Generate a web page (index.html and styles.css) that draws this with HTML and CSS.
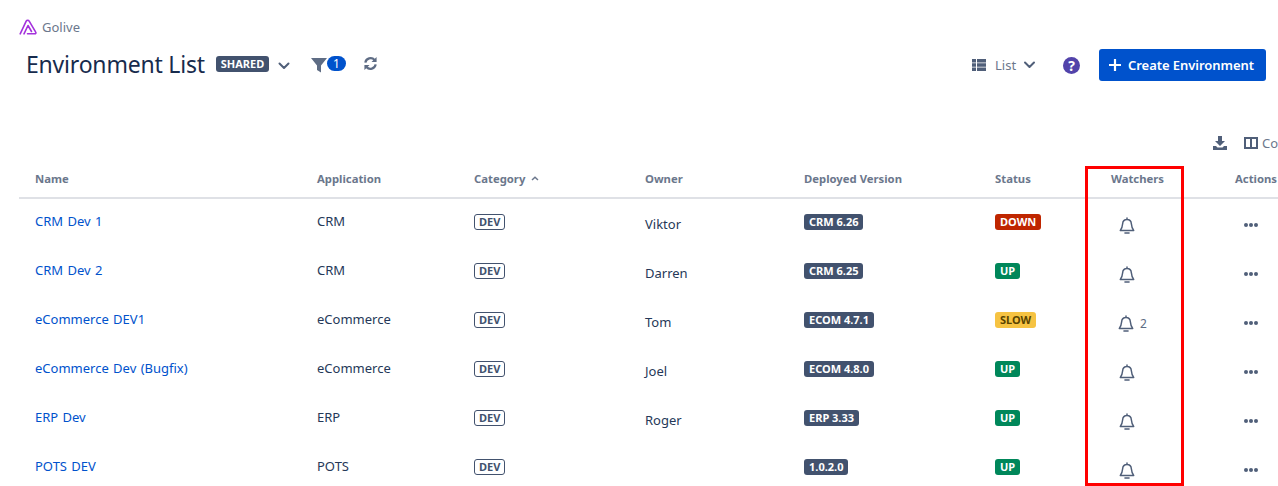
FILE: index.html
```html
<!DOCTYPE html>
<html lang="en">
<head>
<meta charset="utf-8">
<title>Environment List</title>
<link rel="stylesheet" href="styles.css">
</head>
<body>
<svg class="defs" width="0" height="0" aria-hidden="true">
  <symbol id="bell" viewBox="0 0 16 18">
    <path d="M8 1v1.600M8 2.600c-2.700 0-4.200 1.900-4.400 4.400-.2 2.600-.5 4.300-2.300 6.400h13.400c-1.800-2.100-2.100-3.800-2.300-6.400C12.200 4.500 10.700 2.600 8 2.600z" fill="none" stroke="currentColor" stroke-width="1.500" stroke-linejoin="round" stroke-linecap="round"/>
    <path d="M6 16h4" fill="none" stroke="currentColor" stroke-width="1.600" stroke-linecap="round"/>
  </symbol>
  <symbol id="dots" viewBox="0 0 14 4">
    <circle cx="2" cy="2" r="2"/><circle cx="7" cy="2" r="2"/><circle cx="12" cy="2" r="2"/>
  </symbol>
</svg>
<header class="top">
  <div class="crumb">
    <svg class="logo" viewBox="0 0 18 16" aria-hidden="true">
      <path d="M1.200 14.800 7.200 2.200c.6-1.200 2.400-1.200 3 0l6.500 11c.5.800 0 1.600-.9 1.600H8.500M5 14.800 9 6.500l3.500 6" fill="none" stroke="#a431dc" stroke-width="1.600" stroke-linejoin="round" stroke-linecap="round"/>
    </svg>
    <span>Golive</span>
  </div>
  <div class="titlebar">
    <h1 class="title">Environment List</h1>
    <span class="lozenge shared">SHARED</span>
    <svg class="chev" viewBox="0 0 12 8" aria-hidden="true"><path d="M1.500 1.500 6 6l4.500-4.500" fill="none" stroke="currentColor" stroke-width="2" stroke-linecap="round" stroke-linejoin="round"/></svg>
    <span class="filter">
      <svg class="funnel" viewBox="0 0 16 16" aria-hidden="true"><path d="M0 1h16L10 8.500V15.500L6 13V8.500z" fill="currentColor"/></svg>
      <span class="count">1</span>
    </span>
    <svg class="refresh" viewBox="0 0 16 16" aria-hidden="true">
      <path d="M2.500 7A5.600 5.600 0 0 1 12.300 4.200M13.500 9A5.600 5.600 0 0 1 3.700 11.800" fill="none" stroke="currentColor" stroke-width="2.400"/>
      <path d="M14.500 1v5.500H9zM1.500 15V9.500H7z" fill="currentColor"/>
    </svg>
    <div class="actions-right">
      <svg class="listicon" viewBox="0 0 14 12" aria-hidden="true">
        <path d="M0 0h4v3.400H0zM5 0h9v3.400H5zM0 4.300h4v3.400H0zM5 4.300h9v3.400H5zM0 8.600h4V12H0zM5 8.600h9V12H5z" fill="currentColor"/>
      </svg>
      <span class="listlabel">List</span>
      <svg class="chev chev-list" viewBox="0 0 12 8" aria-hidden="true"><path d="M1.500 1.500 6 6l4.500-4.500" fill="none" stroke="currentColor" stroke-width="2" stroke-linecap="round" stroke-linejoin="round"/></svg>
      <span class="help">?</span>
      <button class="create" type="button">
        <svg class="plus" viewBox="0 0 12 12" aria-hidden="true"><path d="M6 .5v11M.5 6h11" stroke="currentColor" stroke-width="2.200" stroke-linecap="round"/></svg>
        Create Environment
      </button>
    </div>
  </div>
</header>
<div class="tools">
  <svg class="download" viewBox="0 0 14 14" aria-hidden="true">
    <path d="M5 0h4v5h3L7 10 2 5h3zM0 10h3l1.500 1.600h5L11 10h3v4H0z" fill="currentColor"/>
  </svg>
  <svg class="columns" viewBox="0 0 14 12" aria-hidden="true">
    <path d="M1 1h12v10H1zM7 1v10" fill="none" stroke="currentColor" stroke-width="2"/>
  </svg>
  <span class="colabel">Co</span>
</div>
<main class="table">
  <div class="row head">
    <div>Name</div><div>Application</div>
    <div>Category <svg class="sort" viewBox="0 0 8 5" aria-hidden="true"><path d="M1 4 4 1.300 7 4" fill="none" stroke="currentColor" stroke-width="1.500"/></svg></div>
    <div>Owner</div><div>Deployed Version</div><div>Status</div><div>Watchers</div><div>Actions</div>
  </div>
  <div class="row">
    <a class="name">CRM Dev 1</a><div class="app">CRM</div><div class="cat"><span class="tag">DEV</span></div><div class="owner">Viktor</div>
    <div class="ver"><span class="lozenge">CRM 6.26</span></div><div class="status"><span class="lozenge down">DOWN</span></div>
    <div class="watch"><svg class="bell"><use href="#bell"/></svg></div><div class="act"><svg class="dots"><use href="#dots"/></svg></div>
  </div>
  <div class="row">
    <a class="name">CRM Dev 2</a><div class="app">CRM</div><div class="cat"><span class="tag">DEV</span></div><div class="owner">Darren</div>
    <div class="ver"><span class="lozenge">CRM 6.25</span></div><div class="status"><span class="lozenge up">UP</span></div>
    <div class="watch"><svg class="bell"><use href="#bell"/></svg></div><div class="act"><svg class="dots"><use href="#dots"/></svg></div>
  </div>
  <div class="row">
    <a class="name">eCommerce DEV1</a><div class="app">eCommerce</div><div class="cat"><span class="tag">DEV</span></div><div class="owner">Tom</div>
    <div class="ver"><span class="lozenge">ECOM 4.7.1</span></div><div class="status"><span class="lozenge slow">SLOW</span></div>
    <div class="watch watched"><svg class="bell"><use href="#bell"/></svg><span class="num">2</span></div><div class="act"><svg class="dots"><use href="#dots"/></svg></div>
  </div>
  <div class="row">
    <a class="name">eCommerce Dev (Bugfix)</a><div class="app">eCommerce</div><div class="cat"><span class="tag">DEV</span></div><div class="owner">Joel</div>
    <div class="ver"><span class="lozenge">ECOM 4.8.0</span></div><div class="status"><span class="lozenge up">UP</span></div>
    <div class="watch"><svg class="bell"><use href="#bell"/></svg></div><div class="act"><svg class="dots"><use href="#dots"/></svg></div>
  </div>
  <div class="row">
    <a class="name">ERP Dev</a><div class="app">ERP</div><div class="cat"><span class="tag">DEV</span></div><div class="owner">Roger</div>
    <div class="ver"><span class="lozenge">ERP 3.33</span></div><div class="status"><span class="lozenge up">UP</span></div>
    <div class="watch"><svg class="bell"><use href="#bell"/></svg></div><div class="act"><svg class="dots"><use href="#dots"/></svg></div>
  </div>
  <div class="row">
    <a class="name">POTS DEV</a><div class="app">POTS</div><div class="cat"><span class="tag">DEV</span></div><div class="owner"></div>
    <div class="ver"><span class="lozenge">1.0.2.0</span></div><div class="status"><span class="lozenge up">UP</span></div>
    <div class="watch"><svg class="bell"><use href="#bell"/></svg></div><div class="act"><svg class="dots"><use href="#dots"/></svg></div>
  </div>
</main>
<div class="highlight"></div>
</body>
</html>
```

FILE: styles.css
```css
* { box-sizing: border-box; }
html, body { height: 100%; }
body {
  margin: 0;
  height: 486px;
  overflow: hidden;
  background: #fff;
  color: #172b4d;
  font-family: "Noto Sans", "Open Sans", sans-serif;
  font-size: 13px;
  position: relative;
}
.defs { position: absolute; }

.top { padding: 18px 12px 0 19px; }
.crumb {
  display: flex;
  align-items: center;
  gap: 5px;
  height: 18px;
  color: #6b778c;
  font-size: 13px;
}
.logo { width: 18px; height: 16px; }
.titlebar {
  display: flex;
  align-items: center;
  height: 32px;
  margin-top: 13px;
  padding-left: 7px;
  color: #505f79;
}
.title {
  margin: -3px 0 0;
  font-size: 23px;
  font-weight: 400;
  color: #172b4d;
  letter-spacing: -0.2px;
  line-height: 32px;
  width: 190px;
  white-space: nowrap;
}
.lozenge {
  display: inline-block;
  height: 16px;
  padding: 0 5px;
  border-radius: 3px;
  background: #42526e;
  color: #fff;
  font-size: 11px;
  font-weight: 700;
  line-height: 16px;
  white-space: nowrap;
}
.shared { margin-top: -3px; width: 53px; text-align: center; padding: 0; }
.down { background: #bf2600; }
.up { background: #00875a; }
.slow { background: #f6c342; color: #594300; }

.chev { width: 12px; height: 8px; color: #505f79; margin: 2px 0 0 9px; }
.filter { display: flex; align-items: center; margin: -2px 0 0 21px; }
.funnel { width: 16px; height: 16px; color: #5e6c84; margin-top: 1px; }
.count {
  width: 19px;
  height: 15px;
  border-radius: 8px;
  background: #0052cc;
  color: #fff;
  font-size: 12px;
  line-height: 15px;
  text-align: center;
  margin-top: -2px;
}
.refresh { width: 15px; height: 15px; margin: -4px 0 0 17px; color: #5e6c84; }

.actions-right { display: flex; align-items: center; margin-left: auto; }
.listicon { width: 14px; height: 12px; color: #505f79; }
.listlabel { margin-left: 9px; color: #6b778c; font-size: 13px; width: 20px; }
.chev-list { width: 13px; margin-left: 8px; margin-top: -1px; }
.help {
  width: 17px;
  height: 17px;
  margin-left: 27px;
  border-radius: 50%;
  background: #5243aa;
  color: #fff;
  font-size: 14px;
  font-weight: 700;
  line-height: 17px;
  text-align: center;
}
.create {
  display: flex;
  align-items: center;
  gap: 7px;
  width: 167px;
  height: 32px;
  margin-left: 19px;
  padding: 0 0 0 10px;
  border: 0;
  border-radius: 3px;
  background: #0052cc;
  color: #fff;
  font-family: inherit;
  font-size: 13px;
  font-weight: 600;
  letter-spacing: -0.05px;
  white-space: nowrap;
}
.plus { width: 12px; height: 12px; flex: none; }

.tools {
  display: flex;
  align-items: center;
  height: 16px;
  margin-top: 54px;
  padding-left: 1213px;
  color: #505f79;
  white-space: nowrap;
}
.download { width: 14px; height: 14px; flex: none; }
.columns { width: 14px; height: 12px; margin-left: 17px; flex: none; }
.colabel { margin-left: 4px; color: #6b778c; font-size: 13px; }

.table { margin: 14px 0 0 19px; width: 1300px; }
.row {
  display: grid;
  grid-template-columns: 298px 157px 171px 159px 191px 116px 124px 84px;
  height: 49px;
  line-height: 18px;
  white-space: nowrap;
}
.row > :first-child { padding-left: 16px; }
.head {
  height: 34px;
  border-bottom: 2px solid #dfe1e6;
  color: #6b778c;
  font-size: 11.300px;
  font-weight: 700;
  padding-top: 5px;
}
.sort { width: 8px; height: 5px; margin: 0 0 2px 3px; }
.name { color: #0052cc; padding-top: 13px; word-spacing: 1px; }
.app { padding-top: 13px; color: #253858; }
.cat { padding-top: 13px; }
.tag {
  display: inline-block;
  height: 16px;
  padding: 0 4px;
  border: 1px solid #42526e;
  border-radius: 3px;
  color: #42526e;
  font-size: 11px;
  font-weight: 700;
  line-height: 14px;
}
.owner { padding-top: 16px; color: #253858; }
.ver, .status { padding-top: 13px; }
.watch { padding: 18px 0 0 8px; color: #505f79; display: flex; align-items: flex-start; }
.watched { padding-left: 7px; }
.bell { width: 16px; height: 18px; }
.num { margin: 1px 0 0 6px; color: #5e6c84; font-size: 12px; line-height: 16px; }
.act { padding: 24px 0 0 9px; }
.dots { width: 14px; height: 4px; display: block; fill: #505f79; }

.highlight {
  position: absolute;
  left: 1085px;
  top: 166px;
  width: 99px;
  height: 320px;
  border: 3px solid #f00;
}
```
